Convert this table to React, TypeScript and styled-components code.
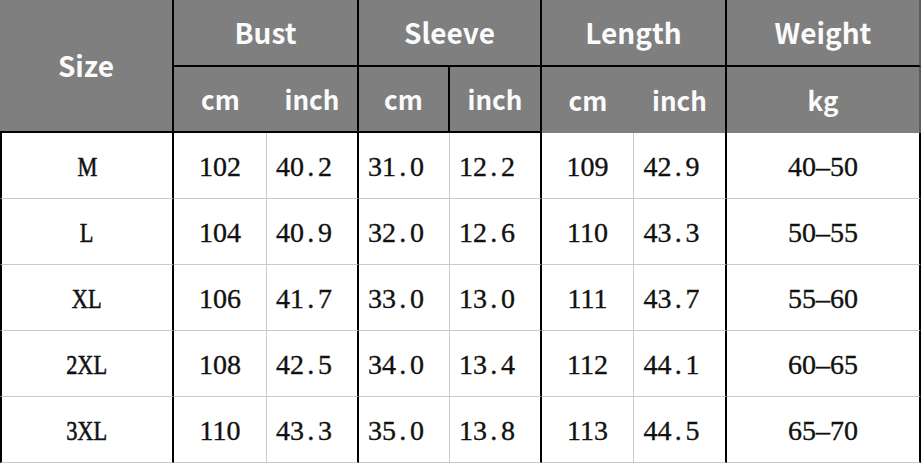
import React from 'react';
import styled, { createGlobalStyle, css } from 'styled-components';

type Edge = 'thick' | 'thin' | 'soft' | 'none';

const GlobalStyle = createGlobalStyle`
  html, body {
    margin: 0;
    padding: 0;
    background: #fff;
  }
`;

const edge = (e: Edge) => {
  if (e === 'thick') return '2px solid #000';
  if (e === 'thin') return '1px solid #cacaca';
  if (e === 'soft') return '2px solid #5c5c5c';
  return '0 solid transparent';
};

const Sheet = styled.div`
  display: grid;
  grid-template-columns: 174px 93px 92px 91px 92px 92px 93px 194px;
  grid-template-rows: 67px 66px repeat(5, 66px);
  width: 921px;
  background: #fff;
`;

const Cell = styled.div<{ $right: Edge; $bottom: Edge; $left?: Edge; $cols?: number; $rows?: number }>`
  box-sizing: border-box;
  display: flex;
  align-items: center;
  justify-content: center;
  border-right: ${(p) => edge(p.$right)};
  border-bottom: ${(p) => edge(p.$bottom)};
  border-left: ${(p) => edge(p.$left || 'none')};
  ${(p) => p.$cols && css`grid-column: span ${p.$cols};`}
  ${(p) => p.$rows && css`grid-row: span ${p.$rows};`}
`;

const HeadCell = styled(Cell)<{ $unit?: boolean }>`
  background: #7f7f7f;
  color: #fbfbfb;
  font-family: "Noto Sans CJK SC", "Noto Sans", sans-serif;
  font-weight: ${(p) => (p.$unit ? 600 : 700)};
  font-size: ${(p) => (p.$unit ? '26px' : '28px')};
  padding-bottom: 2px;
`;

const DataCell = styled(Cell)<{ $decimal?: boolean }>`
  color: #111;
  font-family: "Liberation Serif", "Times New Roman", serif;
  font-size: 28px;
  -webkit-text-stroke: 0.35px #111;
  padding-top: 3px;
  padding-right: ${(p) => (p.$decimal ? '16px' : '0')};
`;

const SizeLabel = styled.span`
  display: inline-block;
  transform: scaleX(0.8);
  -webkit-text-stroke: 0.6px #111;
`;

const Dot = styled.span`
  display: inline-block;
  width: 0.5em;
  padding-left: 0.12em;
  box-sizing: border-box;
  text-align: left;
`;

const colEdges: Edge[] = ['thick', 'thin', 'thick', 'thin', 'thick', 'thin', 'thick', 'thick'];

const groups = ['Bust', 'Sleeve', 'Length'];

const units: { label: string; right: Edge; bottom: Edge }[] = [
  { label: 'cm', right: 'none', bottom: 'thick' },
  { label: 'inch', right: 'thick', bottom: 'thick' },
  { label: 'cm', right: 'thick', bottom: 'thick' },
  { label: 'inch', right: 'thick', bottom: 'thick' },
  { label: 'cm', right: 'none', bottom: 'none' },
  { label: 'inch', right: 'thick', bottom: 'none' },
  { label: 'kg', right: 'soft', bottom: 'none' },
];

const rows = [
  ['M', '102', '40.2', '31.0', '12.2', '109', '42.9', '40–50'],
  ['L', '104', '40.9', '32.0', '12.6', '110', '43.3', '50–55'],
  ['XL', '106', '41.7', '33.0', '13.0', '111', '43.7', '55–60'],
  ['2XL', '108', '42.5', '34.0', '13.4', '112', '44.1', '60–65'],
  ['3XL', '110', '43.3', '35.0', '13.8', '113', '44.5', '65–70'],
];

const Value = ({ text }: { text: string }) => {
  const parts = text.split('.');
  if (parts.length < 2) return <>{text}</>;
  return (
    <span>
      {parts[0]}
      <Dot>.</Dot>
      {parts[1]}
    </span>
  );
};

const App: React.FC = () => {
  return (
    <>
      <GlobalStyle />
      <Sheet>
        <HeadCell $rows={2} $right="thick" $bottom="thick">Size</HeadCell>
        {groups.map((g) => (
          <HeadCell key={g} $cols={2} $right="thick" $bottom="thick">{g}</HeadCell>
        ))}
        <HeadCell $right="soft" $bottom="thick">Weight</HeadCell>

        {units.map((u, i) => (
          <HeadCell key={i} $unit $right={u.right} $bottom={u.bottom}>{u.label}</HeadCell>
        ))}

        {rows.map((row) =>
          row.map((v, i) => (
            <DataCell
              key={row[0] + i}
              $right={colEdges[i]}
              $bottom="thin"
              $left={i === 0 ? 'thick' : undefined}
              $decimal={v.includes('.')}
            >
              {i === 0 ? <SizeLabel>{v}</SizeLabel> : <Value text={v} />}
            </DataCell>
          ))
        )}
      </Sheet>
    </>
  );
};

export default App;
